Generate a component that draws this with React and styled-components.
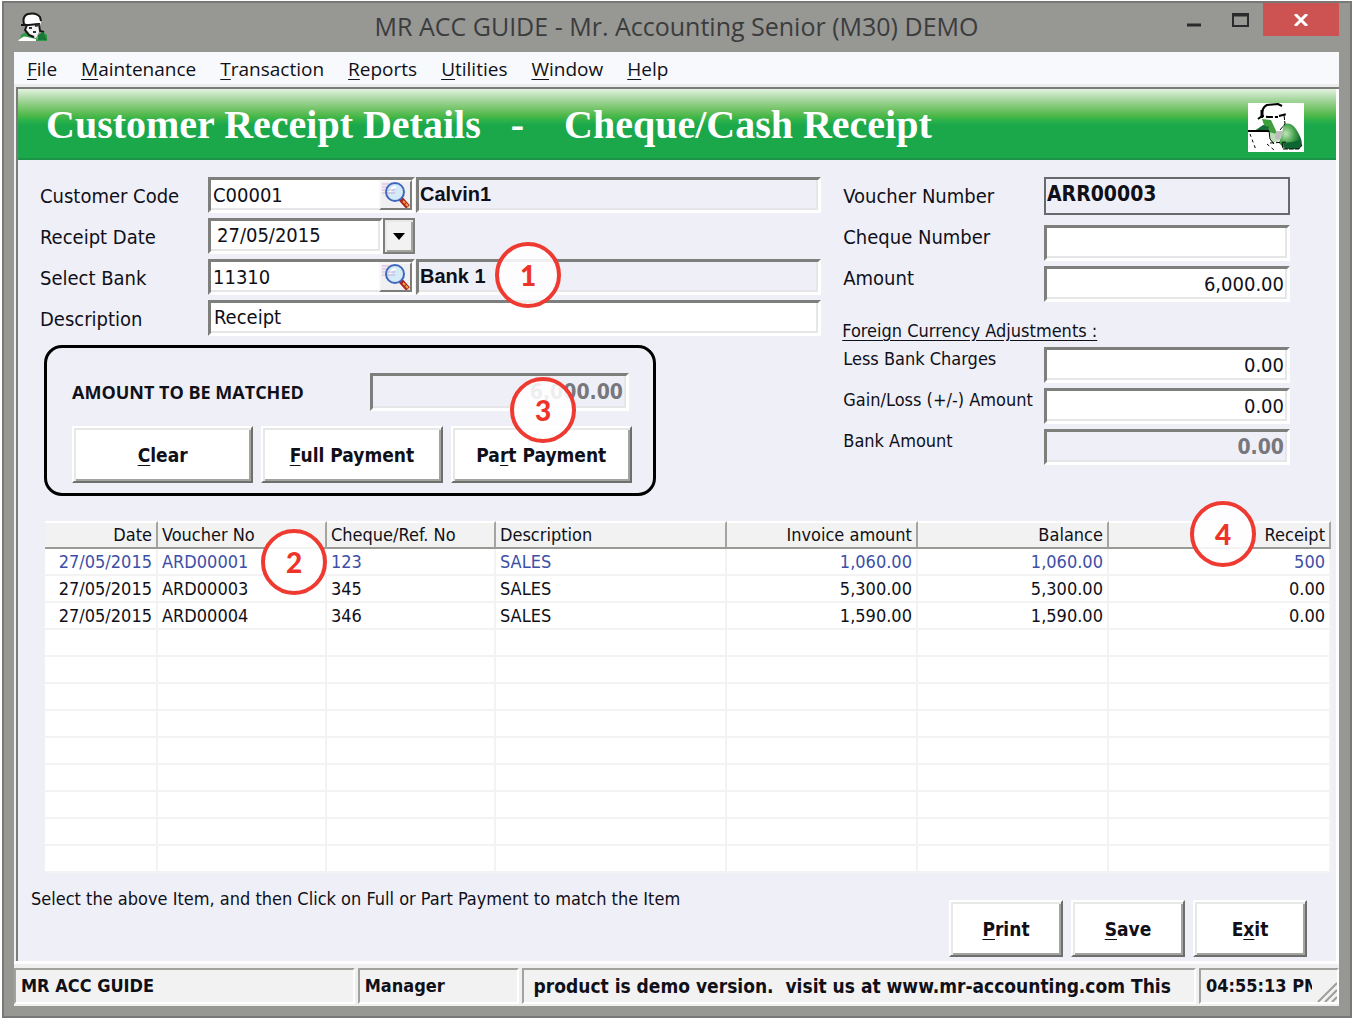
import styled, { createGlobalStyle, css } from 'styled-components'

const GlobalStyle = createGlobalStyle`
	* {
		box-sizing: border-box;
	}
	body {
		margin: 0;
		background-color: #ffffff;
		color: #101018;
		font-family: 'DejaVu Sans Condensed', 'DejaVu Sans', sans-serif;
		font-size: 20px;
		line-height: 24px;
	}
	button,
	input {
		font: inherit;
		color: inherit;
		margin: 0;
		border-radius: 0;
	}
`

const sunken = css`
	border: 3px solid;
	border-color: #7e7e7c #ffffff #ffffff #7e7e7c;
	box-shadow: inset -2px -2px 0 #e6e6e8;
`

const raised = css`
	border: 2px solid;
	border-color: #ffffff #6e6e6c #6e6e6c #ffffff;
	box-shadow: inset 2px 2px 0 #e8e8e8, inset -2px -2px 0 #a3a3a0;
`

const Window = styled.div`
	display: flex;
	flex-direction: column;
	min-height: calc(100vh - 3px);
	margin: 1px 0 2px 2px;
	padding: 0 11px 10px 10px;
	border: 2px solid #777977;
	background-color: #979793;
`

const TitleBar = styled.header`
	display: grid;
	grid-template-columns: 1fr auto 1fr;
	height: 49px;
`

const AppIcon = styled.svg`
	width: 30px;
	height: 30px;
	margin: 8px 0 0 4px;
`

const WindowTitle = styled.h1`
	margin: 0;
	padding-top: 6px;
	font-family: 'Open Sans', 'Noto Sans', sans-serif;
	font-size: 25px;
	font-weight: 400;
	line-height: 34px;
	color: #3b3c3e;
`

const WindowButtons = styled.div`
	display: flex;
	justify-content: flex-end;
	align-items: flex-start;
`

const WindowButton = styled.button`
	display: flex;
	align-items: center;
	justify-content: center;
	width: ${({ $close }) => ($close ? '76px' : '46px')};
	height: 33px;
	padding: 0;
	border: none;
	background-color: ${({ $close }) => ($close ? '#cd5353' : 'transparent')};
`

const Client = styled.div`
	display: flex;
	flex-direction: column;
	flex: 1;
	background-color: #f0f0f0;
`

const MenuBar = styled.nav`
	display: flex;
	gap: 24px;
	height: 35px;
	padding: 0 13px;
	border-bottom: 3px solid #ececec;
	background-color: #f8f9fc;
`

const MenuItem = styled.button`
	padding: 2px 0 0;
	border: none;
	background: none;
	font-family: 'Open Sans', 'Noto Sans', sans-serif;
	font-size: 19px;
	u {
		text-underline-offset: 3px;
	}
`

const Form = styled.main`
	display: flex;
	flex-direction: column;
	flex: 1;
	margin-left: 2px;
	border: solid #7b7b79;
	border-width: 2px 0 0 2px;
	box-shadow: inset -3px 0 0 #ffffff;
	background-color: #efeff8;
`

const Banner = styled.div`
	display: flex;
	align-items: center;
	justify-content: space-between;
	height: 71px;
	margin-right: 3px;
	padding: 3px 32px 0 28px;
	border-bottom: 2px solid #1c9447;
	background: linear-gradient(#e2f2df 0, #a9d8a2 10px, #79c66d 19px, #4bb748 27px, #2eb34a 31px, #1ba84b 36px);
`

const BannerTitle = styled.h2`
	margin: 0;
	font-family: 'Liberation Serif', serif;
	font-size: 40px;
	font-weight: 700;
	line-height: 46px;
	white-space: pre;
	color: #ffffff;
`

const Portrait = styled.svg`
	width: 56px;
	height: 49px;
	margin-top: 5px;
	background-color: #ffffff;
`

const Details = styled.div`
	display: grid;
	grid-template-columns: 780fr 446fr;
	column-gap: 22px;
	padding: 17px 49px 0 22px;
`

const Column = styled.div`
	display: flex;
	flex-direction: column;
	gap: 5px;
`

const Row = styled.div`
	display: grid;
	grid-template-columns: 167px 207px 1fr;
	column-gap: 1px;
	height: 36px;
`

const SideRow = styled.div`
	display: grid;
	grid-template-columns: 1fr 246px;
	height: ${({ $first }) => ($first ? '38px' : '36px')};
	margin-bottom: ${({ $first }) => ($first ? '5px' : '0')};
`

const Label = styled.label`
	padding-top: ${({ $lowered }) => ($lowered ? '7px' : '0')};
	font-size: ${({ $small }) => ($small ? '18px' : '20px')};
	white-space: nowrap;
`

const Field = styled.input`
	${sunken}
	width: 100%;
	min-width: 0;
	height: 36px;
	padding: 0 3px;
	outline: none;
	background-color: ${({ readOnly }) => (readOnly ? '#efeff8' : '#ffffff')};
	font-weight: ${({ $bold }) => ($bold ? 700 : 400)};
	font-size: ${({ $bold }) => ($bold ? '21px' : '20px')};
	text-align: ${({ $amount }) => ($amount ? 'right' : 'left')};
	color: ${({ $muted }) => ($muted ? '#77777c' : 'inherit')};
`

const FlatField = styled(Field)`
	height: 38px;
	padding: 0 1px 4px;
	border: 2px solid #69696b;
	box-shadow: none;
`

const WideField = styled(Field)`
	grid-column: 2 / -1;
	padding-bottom: 2px;
`

const LookupBox = styled.div`
	${sunken}
	display: flex;
	background-color: #ffffff;
`

const LookupInput = styled.input`
	flex: 1;
	min-width: 0;
	padding: 0 2px;
	border: none;
	outline: none;
	background: none;
`

const LookupButton = styled.button`
	display: flex;
	align-items: center;
	justify-content: center;
	width: 33px;
	padding: 0;
	border: 2px solid;
	border-color: #f8f8f8 #7c7c7a #7c7c7a #f8f8f8;
	background-color: #f0f0f2;
`

const DateBox = styled.div`
	display: flex;
`

const DateInput = styled(Field)`
	flex: 1;
	padding: 0 6px 2px;
`

const DropButton = styled.button`
	${raised}
	display: flex;
	align-items: center;
	justify-content: center;
	width: 32px;
	padding: 0;
	background-color: #f2f2f2;
	outline: 2px solid #7e7e7c;
	outline-offset: -2px;
`

const NameBox = styled.div`
	position: relative;
`

const NameField = styled(Field)`
	padding: 0 1px 2px;
	font-family: 'Liberation Sans', sans-serif;
	font-size: 20px;
`

const Callout = styled.span`
	position: absolute;
	z-index: 1;
	top: ${({ $top }) => $top};
	left: ${({ $left }) => $left};
	right: ${({ $right }) => $right};
	display: flex;
	align-items: center;
	justify-content: center;
	width: 66px;
	height: 66px;
	border: 4px solid #ee3a30;
	border-radius: 50%;
	background-color: rgba(255, 255, 255, 0.88);
	font-family: Lato, sans-serif;
	font-size: 28px;
	font-weight: 900;
	color: #ee3329;
`

const Heading = styled.h3`
	margin: 12px 0 -1px -1px;
	font-size: 18px;
	font-weight: 400;
	text-decoration: underline;
	text-underline-offset: 3px;
`

const MatchPanel = styled.section`
	display: flex;
	flex-direction: column;
	gap: 15px;
	width: 612px;
	margin: 4px 0 0 4px;
	padding: 25px 21px 10px 25px;
	border: 3px solid #000000;
	border-radius: 18px;
`

const MatchRow = styled.div`
	position: relative;
	display: flex;
	align-items: center;
	justify-content: space-between;
	padding-right: 3px;
`

const MatchLabel = styled.label`
	font-family: 'Open Sans', sans-serif;
	font-size: 18px;
	font-weight: 700;
`

const MatchField = styled(Field)`
	width: 259px;
	height: 38px;
`

const ButtonRow = styled.div`
	display: flex;
	gap: 8px;
`

const Button = styled.button`
	${raised}
	flex: ${({ $wide }) => ($wide ? '1' : '0 0 114px')};
	height: 57px;
	padding: 0;
	background-color: #ffffff;
	font-size: 19px;
	font-weight: 700;
	u {
		text-underline-offset: 3px;
	}
`

const GridBox = styled.div`
	position: relative;
	margin: 25px 8px 0 27px;
`

const Grid = styled.table`
	width: 100%;
	table-layout: fixed;
	border-collapse: separate;
	border-spacing: 0;
	background-color: #ffffff;
	font-size: 18px;
`

const HeadCell = styled.th`
	width: ${({ $width }) => $width};
	height: 28px;
	padding: 0 4px;
	border: solid;
	border-width: 2px 2px 2px 0;
	border-color: #ffffff #a5a5a0 #9a9a96 #ffffff;
	background-color: #f2f2f2;
	font-weight: 400;
	text-align: ${({ $right }) => ($right ? 'right' : 'left')};
	white-space: nowrap;
`

const Cell = styled.td`
	height: 27px;
	padding: 0 4px;
	border: solid #f3f3f4;
	border-width: 0 2px 2px 0;
	color: ${({ $active }) => ($active ? '#3d4fa6' : 'inherit')};
	text-align: ${({ $right }) => ($right ? 'right' : 'left')};
	white-space: nowrap;
`

const Footer = styled.div`
	display: flex;
	justify-content: space-between;
	flex: 1;
	padding: 14px 32px 4px 13px;
`

const Hint = styled.p`
	margin: 0;
	font-size: 18px;
`

const Actions = styled.div`
	display: flex;
	gap: 8px;
	padding-top: 13px;
`

const StatusBar = styled.footer`
	display: grid;
	grid-template-columns: 341fr 161fr 675fr 140px;
	column-gap: 3px;
	height: 45px;
	padding: 4px 0 2px;
	border-top: 3px solid #ffffff;
	background-color: #f0f0f0;
`

const StatusPanel = styled.div`
	display: flex;
	align-items: center;
	min-width: 0;
	padding: 0 5px 0 ${({ $scroll }) => ($scroll ? '10px' : '5px')};
	border: 2px solid;
	border-color: #a2a29e #ffffff #ffffff #a2a29e;
	background-color: #f2f2f2;
	font-size: ${({ $scroll }) => ($scroll ? '19px' : '18px')};
	font-weight: 700;
	white-space: pre;
`

const Clock = styled.span`
	flex: 1;
	overflow: hidden;
	margin-right: 5px;
`

const Grip = styled.svg`
	flex: none;
	align-self: flex-end;
	width: 20px;
	height: 20px;
	margin-right: -5px;
`

const columns = [
	{ name: 'Date', share: 113, right: true },
	{ name: 'Voucher No', share: 169 },
	{ name: 'Cheque/Ref. No', share: 169 },
	{ name: 'Description', share: 231 },
	{ name: 'Invoice amount', share: 191, right: true },
	{ name: 'Balance', share: 191, right: true },
	{ name: 'Receipt', share: 222, right: true },
]
const totalShare = columns.reduce((sum, column) => sum + column.share, 0)

const invoices = [
	['27/05/2015', 'ARD00001', '123', 'SALES', '1,060.00', '1,060.00', '500'],
	['27/05/2015', 'ARD00003', '345', 'SALES', '5,300.00', '5,300.00', '0.00'],
	['27/05/2015', 'ARD00004', '346', 'SALES', '1,590.00', '1,590.00', '0.00'],
]
const rows = [...invoices, ...Array.from({ length: 9 }, () => columns.map(() => ''))]

const menus = ['File', 'Maintenance', 'Transaction', 'Reports', 'Utilities', 'Window', 'Help']

function Mnemonic({ text, at = 0 }) {
	return (
		<span>
			{text.slice(0, at)}
			<u>{text[at]}</u>
			{text.slice(at + 1)}
		</span>
	)
}

function ManIcon() {
	return (
		<AppIcon viewBox="0 0 30 30" aria-hidden="true">
			<path d="M1 30 L3 24 L9 20 L20 29 L25 21 L29 24 L29 30 Z" fill="#2f9a48" />
			<path d="M0 30 Q5 24 9 26 L18 28 L18 30 Z" fill="#fff" />
			<path d="M8 11 L23 11 L22 19 L18 27 L13 25 L8 18 Z" fill="#f4f4f4" />
			<path d="M6 12 Q5 5 10 3 Q19 1 22 6 L23 12 Q16 14 6 12 Z" fill="#fff" />
			<path d="M6 13 Q4 5 10 3 Q18 1 22 6 L23 10" fill="none" stroke="#161616" strokeWidth="2" />
			<path d="M3 14 L11 14 L20 13 M9 14 L7 19 L11 24 L16 26 M21 12 L22 20 L26 21" fill="none" stroke="#161616" strokeWidth="2" />
			<path d="M11 17 L14 17 M17 15 L22 14 M15 21 L18 21" stroke="#333" strokeWidth="2" />
			<path d="M20 24 L25 21 L29 29 L20 29 Z" fill="#197a36" />
		</AppIcon>
	)
}

function AccountantPicture() {
	return (
		<Portrait viewBox="0 0 56 49" aria-hidden="true">
			<defs>
				<radialGradient id="coat" cx="0.3" cy="0.4" r="0.7">
					<stop offset="0" stopColor="#c2e6b8" />
					<stop offset="0.55" stopColor="#42a24a" />
					<stop offset="1" stopColor="#0e5a2e" />
				</radialGradient>
			</defs>
			<path d="M36 21 Q43 19 48 26 Q54 35 54 42 L51 46 L37 46 L31 40 L34 30 Z" fill="url(#coat)" />
			<path d="M14 16 L23 17 L29 30 L24 32 L20 28 L8 27 L16 22 Z" fill="#3e9f3c" />
			<path d="M8 27 L15 22 L21 24 L20 28 Z" fill="#176d38" />
			<path d="M21 29 L28 31 L30 39 L24 39 Z" fill="#b8dfb2" />
			<path d="M28 28 L35 28 L31 38 L27 35 Z" fill="#bdbdbd" />
			<path d="M14 15 L14 9 Q15 4 19 2 L30 1 L34 3" fill="none" stroke="#000" strokeWidth="2" />
			<path d="M14 14 L14 7" stroke="#000" strokeWidth="3" />
			<path d="M10 16 L14 13 L20 14 L30 14 M31 13 L39 11" fill="none" stroke="#000" strokeWidth="2" strokeDasharray="7 2" />
			<path d="M36 12 L37 21 L32 27" fill="none" stroke="#000" strokeWidth="1" strokeDasharray="5 1" />
			<path d="M0 28 L21 28 L22 36 L26 41" fill="none" stroke="#000" strokeWidth="1" />
			<path d="M0 28 L21 28" stroke="#000" strokeWidth="2" />
			<path d="M2 31 L8 47 M19 41 L26 47" stroke="#000" strokeWidth="1" strokeDasharray="3 3" />
			<path d="M22 40 L40 39" stroke="#000" strokeWidth="1" strokeDasharray="4 2" />
			<path d="M34 40 L35 46 L51 46 L54 42" fill="none" stroke="#000" strokeWidth="1" strokeDasharray="5 1" />
			<path d="M44 39 L53 37 L52 45 L37 45 L35 40 Z" fill="#0f6433" />
		</Portrait>
	)
}

function SearchIcon() {
	return (
		<svg width="28" height="26" viewBox="0 0 28 26" aria-hidden="true">
			<path d="M0 2h16M0 5h14M0 8h16M0 11h14" stroke="#d9b3dc" strokeWidth="1" />
			<path d="M18 16 L26 25" stroke="#a92323" strokeWidth="5" />
			<path d="M21 19 L27 25" stroke="#f1a53c" strokeWidth="2" strokeDasharray="3 1" />
			<circle cx="13" cy="10" r="9" fill="#cfeaf8" fillOpacity="0.85" stroke="#3f68bd" strokeWidth="2" />
			<path d="M8 10 Q9 5 14 5" fill="none" stroke="#ffffff" strokeWidth="2" />
			<path d="M5 8h8M5 11h8" stroke="#c9aedd" strokeWidth="1" />
		</svg>
	)
}

function Lookup({ id, value, label }) {
	return (
		<LookupBox>
			<LookupInput id={id} defaultValue={value} />
			<LookupButton type="button" aria-label={label}>
				<SearchIcon />
			</LookupButton>
		</LookupBox>
	)
}

function App() {
	return (
		<>
			<GlobalStyle />
			<Window>
				<TitleBar>
					<ManIcon />
					<WindowTitle>MR ACC GUIDE - Mr. Accounting Senior (M30) DEMO</WindowTitle>
					<WindowButtons>
						<WindowButton type="button" aria-label="Minimize">
							<svg width="14" height="14" viewBox="0 0 14 14">
								<path d="M0 12h14" stroke="#2b2b2d" strokeWidth="3" />
							</svg>
						</WindowButton>
						<WindowButton type="button" aria-label="Maximize">
							<svg width="17" height="14" viewBox="0 0 17 14">
								<path d="M1 1h15v12H1z" fill="none" stroke="#2b2b2d" strokeWidth="2" />
								<path d="M0 2h17" stroke="#2b2b2d" strokeWidth="3" />
							</svg>
						</WindowButton>
						<WindowButton type="button" $close aria-label="Close">
							<svg width="14" height="12" viewBox="0 0 14 12">
								<path d="M1 0 L13 12 M13 0 L1 12" stroke="#fff" strokeWidth="3" />
							</svg>
						</WindowButton>
					</WindowButtons>
				</TitleBar>
				<Client>
					<MenuBar>
						{menus.map((menu) => (
							<MenuItem key={menu} type="button">
								<Mnemonic text={menu} />
							</MenuItem>
						))}
					</MenuBar>
					<Form>
						<Banner>
							<BannerTitle>{'Customer Receipt Details   -    Cheque/Cash Receipt'}</BannerTitle>
							<AccountantPicture />
						</Banner>
						<Details>
							<Column>
								<Row>
									<Label htmlFor="customer" $lowered>
										Customer Code
									</Label>
									<Lookup id="customer" value="C00001" label="Find customer" />
									<NameBox>
										<NameField readOnly $bold value="Calvin1" aria-label="Customer name" />
									</NameBox>
								</Row>
								<Row>
									<Label htmlFor="date" $lowered>
										Receipt Date
									</Label>
									<DateBox>
										<DateInput id="date" defaultValue="27/05/2015" />
										<DropButton type="button" aria-label="Pick date">
											<svg width="12" height="7" viewBox="0 0 12 7">
												<path d="M0 0h12L6 7z" />
											</svg>
										</DropButton>
									</DateBox>
								</Row>
								<Row>
									<Label htmlFor="bank" $lowered>
										Select Bank
									</Label>
									<Lookup id="bank" value="11310" label="Find bank" />
									<NameBox>
										<NameField readOnly $bold value="Bank 1" aria-label="Bank name" />
										<Callout $top="-17px" $left="79px">
											1
										</Callout>
									</NameBox>
								</Row>
								<Row>
									<Label htmlFor="description" $lowered>
										Description
									</Label>
									<WideField id="description" defaultValue="Receipt" />
								</Row>
								<MatchPanel>
									<MatchRow>
										<MatchLabel htmlFor="match">AMOUNT TO BE MATCHED</MatchLabel>
										<MatchField id="match" readOnly $bold $amount $muted value="6,000.00" />
										<Callout $top="4px" $right="56px">
											3
										</Callout>
									</MatchRow>
									<ButtonRow>
										<Button type="button" $wide>
											<Mnemonic text="Clear" />
										</Button>
										<Button type="button" $wide>
											<Mnemonic text="Full Payment" />
										</Button>
										<Button type="button" $wide>
											<Mnemonic text="Part Payment" at={2} />
										</Button>
									</ButtonRow>
								</MatchPanel>
							</Column>
							<Column>
								<SideRow $first>
									<Label htmlFor="voucher" $lowered>
										Voucher Number
									</Label>
									<FlatField id="voucher" readOnly $bold value="ARR00003" />
								</SideRow>
								<SideRow>
									<Label htmlFor="cheque">Cheque Number</Label>
									<Field id="cheque" defaultValue="" />
								</SideRow>
								<SideRow>
									<Label htmlFor="amount">Amount</Label>
									<Field id="amount" $amount defaultValue="6,000.00" />
								</SideRow>
								<Heading>Foreign Currency Adjustments :</Heading>
								<SideRow>
									<Label htmlFor="charges" $small>
										Less Bank Charges
									</Label>
									<Field id="charges" $amount defaultValue="0.00" />
								</SideRow>
								<SideRow>
									<Label htmlFor="gain" $small>
										Gain/Loss (+/-) Amount
									</Label>
									<Field id="gain" $amount defaultValue="0.00" />
								</SideRow>
								<SideRow>
									<Label htmlFor="bankAmount" $small>
										Bank Amount
									</Label>
									<Field id="bankAmount" readOnly $bold $amount $muted value="0.00" />
								</SideRow>
							</Column>
						</Details>
						<GridBox>
							<Grid>
								<thead>
									<tr>
										{columns.map((column) => (
											<HeadCell key={column.name} $right={column.right} $width={`${(column.share / totalShare) * 100}%`}>
												{column.name}
											</HeadCell>
										))}
									</tr>
								</thead>
								<tbody>
									{rows.map((row, rowIndex) => (
										<tr key={rowIndex}>
											{row.map((value, index) => (
												<Cell key={columns[index].name} $right={columns[index].right} $active={rowIndex === 0}>
													{value}
												</Cell>
											))}
										</tr>
									))}
								</tbody>
							</Grid>
							<Callout $top="8px" $left="216px">
								2
							</Callout>
							<Callout $top="-20px" $right="75px">
								4
							</Callout>
						</GridBox>
						<Footer>
							<Hint>Select the above Item, and then Click on Full or Part Payment to match the Item</Hint>
							<Actions>
								<Button type="button">
									<Mnemonic text="Print" />
								</Button>
								<Button type="button">
									<Mnemonic text="Save" />
								</Button>
								<Button type="button">
									<Mnemonic text="Exit" at={1} />
								</Button>
							</Actions>
						</Footer>
					</Form>
					<StatusBar>
						<StatusPanel>MR ACC GUIDE</StatusPanel>
						<StatusPanel>Manager</StatusPanel>
						<StatusPanel $scroll>{'product is demo version.  visit us at www.mr-accounting.com This'}</StatusPanel>
						<StatusPanel>
							<Clock>04:55:13 PM</Clock>
							<Grip viewBox="0 0 20 20" aria-hidden="true">
								<path d="M1 20 L20 1 M8 20 L20 8 M15 20 L20 15" stroke="#9d9d99" strokeWidth="2" />
							</Grip>
						</StatusPanel>
					</StatusBar>
				</Client>
			</Window>
		</>
	)
}

export default App
